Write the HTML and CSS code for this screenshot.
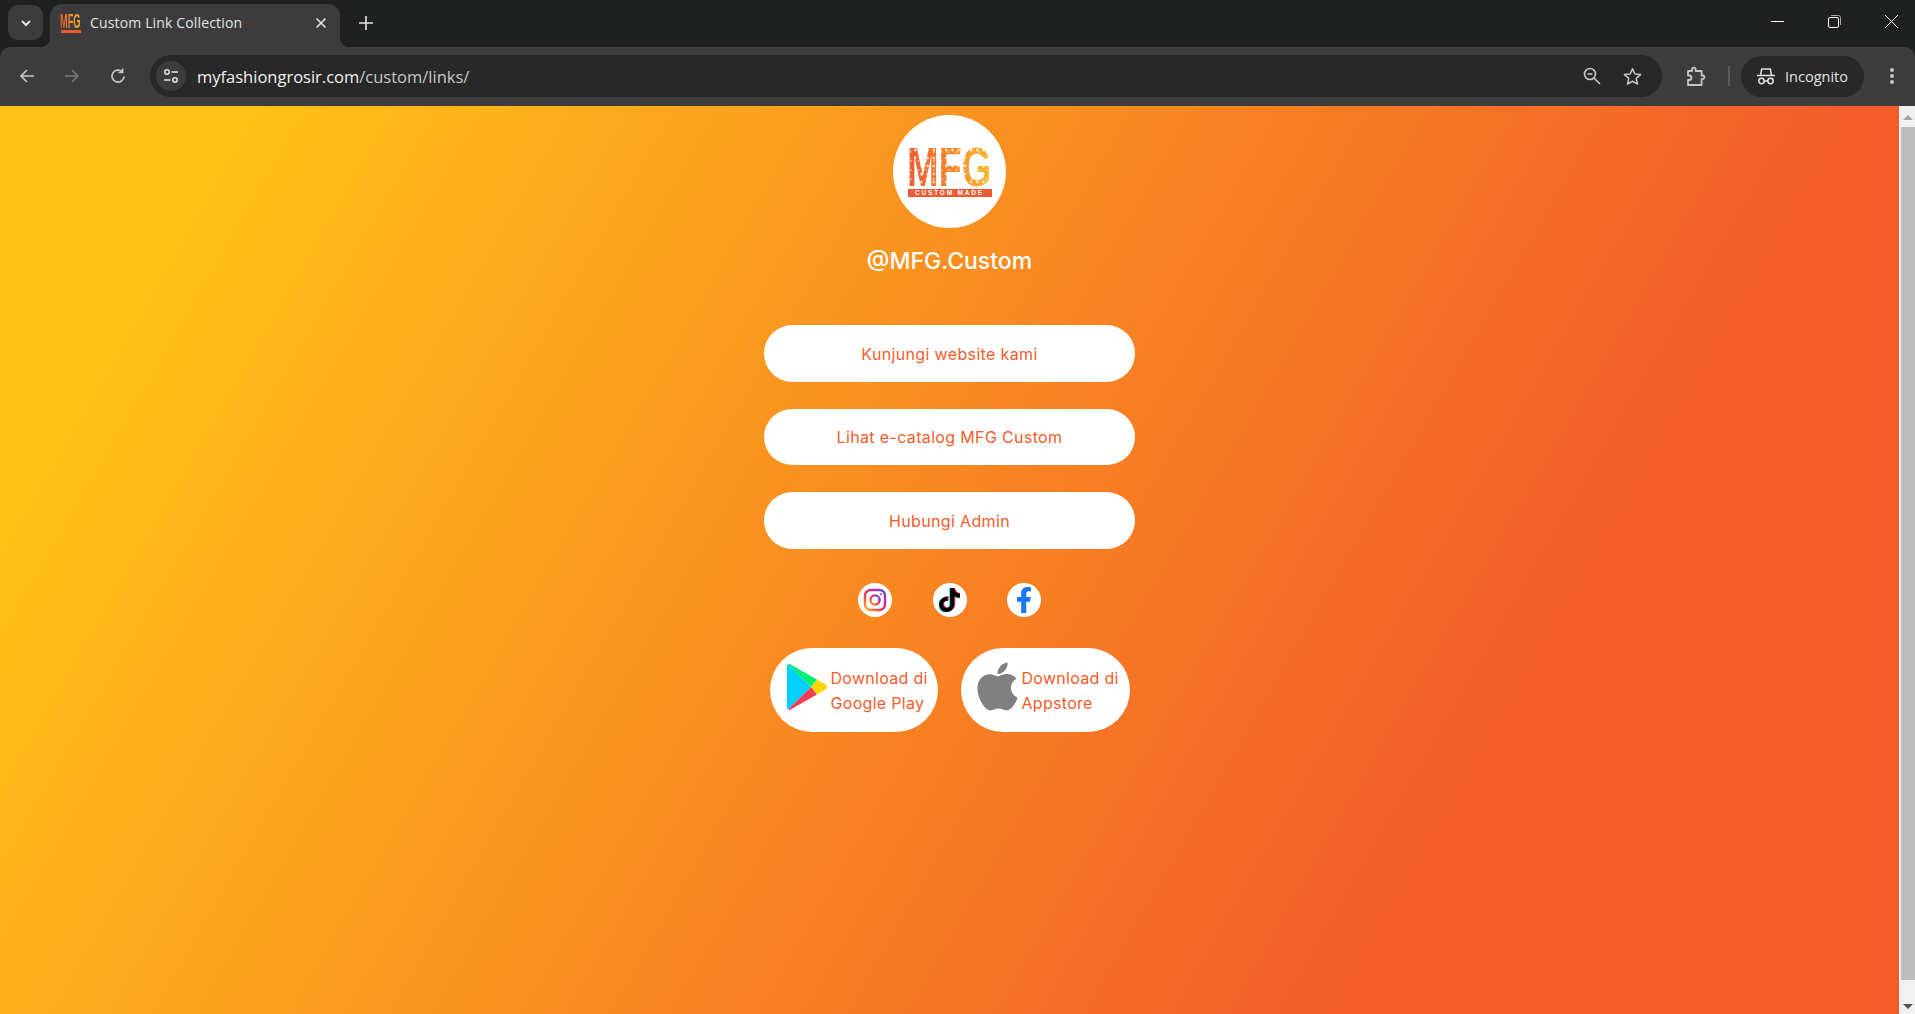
FILE: index.html
```html
<!DOCTYPE html>
<html lang="id">
<head>
  <meta charset="UTF-8">
  <meta name="viewport" content="width=device-width, initial-scale=1">
  <title>Custom Link Collection</title>
  <link rel="stylesheet" href="styles.css">
</head>
<body>

  <svg class="defs" width="0" height="0">
    <defs>
      <linearGradient id="igFill" x1="0" x2="1" y1="1" y2="0">
        <stop offset="0" stop-color="#fdc11f"/>
        <stop offset="0.35" stop-color="#f3433f"/>
        <stop offset="0.7" stop-color="#c32aa3"/>
        <stop offset="1" stop-color="#4f5bd5"/>
      </linearGradient>
    </defs>
  </svg>

  <!-- barra de abas -->
  <div class="tabstrip">
    <button class="tab-search">
      <svg width="14" height="14" viewBox="0 0 14 14"><path d="M3 5l4 4 4-4" fill="none" stroke="#e3e3e3" stroke-width="2"/></svg>
    </button>
    <div class="tab">
      <div class="favicon">
        <span class="favicon-mark">MFG</span>
        <span class="favicon-band"></span>
      </div>
      <span class="tab-title">Custom Link Collection</span>
      <svg class="tab-close" width="12" height="12" viewBox="0 0 12 12"><path d="M1.500 1.500l9 9M10.500 1.500l-9 9" stroke="#e3e3e3" stroke-width="1.600"/></svg>
    </div>
    <svg class="new-tab" width="14" height="14" viewBox="0 0 14 14"><path d="M7 0v14M0 7h14" stroke="#e3e3e3" stroke-width="1.600"/></svg>
    <div class="window-controls">
      <svg width="13" height="13" viewBox="0 0 13 13"><path d="M0 6.500h13" stroke="#fff"/></svg>
      <svg width="13" height="13" viewBox="0 0 13 13"><rect x="0.500" y="2.500" width="10" height="10" rx="1.500" fill="none" stroke="#fff"/><path d="M3 .5h7.500a2 2 0 0 1 2 2V10" fill="none" stroke="#aaa"/></svg>
      <svg width="13" height="13" viewBox="0 0 13 13"><path d="M0 0l13 13M13 0L0 13" stroke="#fff"/></svg>
    </div>
  </div>

  <!-- barra de endereco -->
  <div class="toolbar">
    <svg class="nav" width="18" height="18" viewBox="0 0 18 18"><path d="M16 9H3M9 3L3 9l6 6" fill="none" stroke="#c7c7c7" stroke-width="1.700"/></svg>
    <svg class="nav" width="18" height="18" viewBox="0 0 18 18"><path d="M2 9h13M9 3l6 6-6 6" fill="none" stroke="#777" stroke-width="1.700"/></svg>
    <svg class="nav" width="18" height="18" viewBox="0 0 18 18"><path d="M15 9.500A6 6 0 1 1 13 4.600M13.600 1.500v4h-4" fill="none" stroke="#c7c7c7" stroke-width="1.700"/></svg>
    <div class="omnibox">
      <span class="site-chip">
        <svg width="16" height="16" viewBox="0 0 16 16" fill="none" stroke="#e3e3e3" stroke-width="1.500"><circle cx="4" cy="4" r="2.200"/><path d="M8.500 4H15M1 12h6.500"/><circle cx="12" cy="12" r="2.200"/></svg>
      </span>
      <span class="url"><span class="url-host">myfashiongrosir.com</span>/custom/links/</span>
      <svg class="omni-zoom" width="18" height="18" viewBox="0 0 18 18" fill="none" stroke="#c7c7c7" stroke-width="1.600"><circle cx="7" cy="7" r="5.500"/><path d="M11 11l6 6M4.500 7h5"/></svg>
      <svg class="omni-star" width="19" height="19" viewBox="0 0 20 20"><path d="M10 1.800l2.500 5.600 6 .6-4.600 4 1.400 6L10 15l-5.300 3 1.400-6-4.600-4 6-.6z" fill="none" stroke="#c7c7c7" stroke-width="1.600" stroke-linejoin="round"/></svg>
    </div>
    <svg class="extensions" width="20" height="21" viewBox="0 0 20 21"><path d="M2 5h4V3.500a1.800 1.800 0 0 1 3.600 0V5h6v4.500h1a1.800 1.800 0 0 1 0 3.600h-1V19H2v-5h1.200a2.200 2.200 0 0 0 0-4.500H2z" fill="none" stroke="#c7c7c7" stroke-width="1.800" stroke-linejoin="round"/></svg>
    <span class="divider"></span>
    <div class="incognito">
      <svg width="18" height="18" viewBox="0 0 18 18" fill="none" stroke="#e3e3e3" stroke-width="1.500"><path d="M0 8.500h18"/><path d="M3.500 8.500l1.200-6.500h8.600l1.200 6.500"/><circle cx="4.500" cy="14" r="2.700"/><circle cx="13.500" cy="14" r="2.700"/><path d="M7 14h4"/></svg>
      <span>Incognito</span>
    </div>
    <svg class="menu-dots" width="4" height="16" viewBox="0 0 4 16" fill="#c7c7c7"><circle cx="2" cy="2" r="2"/><circle cx="2" cy="8" r="2"/><circle cx="2" cy="14" r="2"/></svg>
  </div>

  <div class="viewport">
    <main class="page">
      <div class="avatar">
        <div class="logo">
          <span class="logo-mark">MFG</span>
          <span class="logo-sub">CUSTOM MADE</span>
        </div>
      </div>
      <h1 class="handle">@MFG.Custom</h1>

      <div class="links">
        <a class="link-btn" href="#">Kunjungi website kami</a>
        <a class="link-btn link-btn-short" href="#">Lihat e-catalog MFG Custom</a>
        <a class="link-btn" href="#">Hubungi Admin</a>
      </div>

      <div class="socials">
        <a class="social" href="#">
          <svg width="24" height="24" viewBox="0 0 24 24" fill="none" stroke="url(#igFill)" stroke-width="2.400">
            <rect x="2" y="2" width="20" height="20" rx="5.500"/>
            <circle cx="12" cy="12" r="4.600"/>
            <circle cx="17.800" cy="6.200" r="0.600" fill="#c32aa3" stroke="#c32aa3" stroke-width="1"/>
          </svg>
        </a>
        <a class="social" href="#">
          <svg width="21" height="24" viewBox="0 0 448 512">
            <path transform="translate(-22 12)" fill="#25f4ee" d="M448,209.91a210.06,210.06,0,0,1-122.77-39.25V349.38A162.55,162.55,0,1,1,185,188.31V278.2a74.62,74.62,0,1,0,52.23,71.18V0l88,0a121.18,121.18,0,0,0,1.86,22.17h0A122.18,122.18,0,0,0,381,102.39a121.43,121.43,0,0,0,67,20.14Z"/>
            <path transform="translate(22 -12)" fill="#fe2c55" d="M448,209.91a210.06,210.06,0,0,1-122.77-39.25V349.38A162.55,162.55,0,1,1,185,188.31V278.2a74.62,74.62,0,1,0,52.23,71.18V0l88,0a121.18,121.18,0,0,0,1.86,22.17h0A122.18,122.18,0,0,0,381,102.39a121.43,121.43,0,0,0,67,20.14Z"/>
            <path fill="#000" d="M448,209.91a210.06,210.06,0,0,1-122.77-39.25V349.38A162.55,162.55,0,1,1,185,188.31V278.2a74.62,74.62,0,1,0,52.23,71.18V0l88,0a121.18,121.18,0,0,0,1.86,22.17h0A122.18,122.18,0,0,0,381,102.39a121.43,121.43,0,0,0,67,20.14Z"/>
          </svg>
        </a>
        <a class="social" href="#">
          <svg width="18" height="26" viewBox="0 0 320 512"><path fill="#1877f2" d="M279.14 288l14.22-92.66h-88.91v-60.13c0-25.35 12.42-50.06 52.24-50.06h40.42V6.26S260.43 0 225.36 0c-73.22 0-121.08 44.38-121.08 124.72v70.62H22.89V288h81.39v224h100.17V288z"/></svg>
        </a>
      </div>

      <div class="stores">
        <a class="store-btn store-play" href="#">
          <svg class="store-icon" width="40" height="48" viewBox="0 0 40 48">
            <path d="M1 1.500L24 24 1 46.500C.4 46 0 45.300 0 44.500v-41C0 2.700.4 2 1 1.500z" fill="#00d0ff"/>
            <path d="M1 1.500c.7-.5 1.600-.6 2.500-.1L30 16.500 24 24z" fill="#00ee76"/>
            <path d="M1 46.500c.7.5 1.600.6 2.500.1L30 31.500 24 24z" fill="#f53c54"/>
            <path d="M30 16.500l8.500 5c1.900 1.100 1.900 3.900 0 5l-8.500 5L24 24z" fill="#ffd500"/>
          </svg>
          <span>Download di<br>Google Play</span>
        </a>
        <a class="store-btn store-apple" href="#">
          <svg class="store-icon" width="41" height="55" viewBox="0 0 384 512"><path fill="#808080" d="M318.7 268.7c-.2-36.7 16.4-64.4 50-84.8-18.8-26.9-47.2-41.7-84.7-44.6-35.5-2.8-74.3 20.7-88.5 20.7-15 0-49.4-19.7-76.4-19.7C63.3 141.2 4 184.8 4 273.5q0 39.3 14.4 81.2c12.8 36.7 59 126.7 107.2 125.2 25.2-.6 43-17.9 75.8-17.9 31.8 0 48.3 17.9 76.4 17.9 48.6-.7 90.4-82.5 102.6-119.3-65.2-30.7-61.7-90-61.7-91.9zm-56.6-164.2c27.3-32.4 24.8-61.9 24-72.5-24.1 1.4-52 16.4-67.9 34.9-17.5 19.8-27.8 44.3-25.6 71.9 26.1 2 49.9-11.4 69.5-34.3z"/></svg>
          <span>Download di<br>Appstore</span>
        </a>
      </div>
    </main>

    <div class="scrollbar">
      <span class="arrow-up"></span>
      <span class="thumb"></span>
      <span class="arrow-down"></span>
    </div>
  </div>

</body>
</html>
```

FILE: styles.css
```css
* {
  box-sizing: border-box;
}
html, body {
  height: 100%;
}
body {
  margin: 0;
  display: flex;
  flex-direction: column;
  overflow: hidden;
  font-family: "Open Sans", "Noto Sans", sans-serif;
  background-color: #1f2120;
}
.defs {
  display: block;
  height: 0;
}

/* barra de abas */
.tabstrip {
  height: 47px;
  display: flex;
  align-items: flex-start;
  padding: 4px 0 0 8px;
  background-color: #1f2120;
  flex-shrink: 0;
}
.tab-search {
  width: 35px;
  height: 35px;
  margin-top: 1px;
  padding: 0;
  border: none;
  border-radius: 10px;
  background-color: #3c3c3c;
  display: flex;
  align-items: center;
  justify-content: center;
}
.tab {
  width: 290px;
  height: 43px;
  margin-left: 7px;
  padding: 0 13px 6px 10px;
  border-radius: 12px 12px 0 0;
  background-color: #3c3c3c;
  display: flex;
  align-items: center;
  color: #e3e3e3;
  font-size: 14px;
  position: relative;
}
.tab::before,
.tab::after {
  content: "";
  position: absolute;
  bottom: 0;
  width: 10px;
  height: 10px;
}
.tab::before {
  left: -10px;
  background: radial-gradient(circle at 0 0, #1f2120 10px, #3c3c3c 10.5px);
}
.tab::after {
  right: -10px;
  background: radial-gradient(circle at 100% 0, #1f2120 10px, #3c3c3c 10.5px);
}
.favicon {
  width: 21px;
  display: flex;
  flex-direction: column;
  align-items: center;
  flex-shrink: 0;
}
.favicon-mark {
  flex-shrink: 0;
  height: 16px;
  font-family: "Liberation Sans", sans-serif;
  font-weight: 700;
  font-size: 20px;
  line-height: 16px;
  white-space: nowrap;
  transform: scaleX(0.46);
  background: linear-gradient(90deg, #ee5a33, #f58a2c 55%, #fbb92f);
  -webkit-background-clip: text;
  background-clip: text;
  color: transparent;
}
.favicon-band {
  width: 20px;
  height: 3px;
  margin-top: 1px;
  background-color: #ee5a33;
}
.tab-title {
  margin-left: 9px;
  flex: 1;
  letter-spacing: 0.15px;
  white-space: nowrap;
}
.tab-close {
  flex-shrink: 0;
}
.new-tab {
  margin: 12px 0 0 19px;
}
.window-controls {
  margin-left: auto;
  width: 127px;
  margin-right: 17px;
  margin-top: 11px;
  display: flex;
  justify-content: space-between;
}

/* barra de endereco */
.toolbar {
  height: 59px;
  display: flex;
  align-items: center;
  padding: 0 21px 1px 18px;
  border-radius: 10px 10px 0 0;
  background-color: #3c3c3c;
  flex-shrink: 0;
}
.nav {
  margin-right: 27px;
  flex-shrink: 0;
}
.nav:nth-child(2) {
  margin-right: 28px;
}
.nav:nth-child(3) {
  margin-right: 23px;
}
.omnibox {
  width: 1512px;
  height: 42px;
  padding: 0 20px 0 6px;
  border-radius: 21px;
  background-color: #282828;
  display: flex;
  align-items: center;
}
.site-chip {
  width: 30px;
  height: 30px;
  border-radius: 50%;
  background-color: #3c3c3c;
  display: flex;
  align-items: center;
  justify-content: center;
}
.url {
  margin-left: 11px;
  flex: 1;
  color: #c7c7c7;
  font-size: 16.500px;
}
.url-host {
  color: #f1f1f1;
}
.omni-zoom {
  margin-right: 22px;
}
.extensions {
  margin-left: 24px;
}
.divider {
  width: 2px;
  height: 20px;
  margin-left: 22px;
  background-color: #5a5a5a;
}
.incognito {
  width: 123px;
  height: 41px;
  margin-left: 11px;
  border-radius: 21px;
  background-color: #282828;
  display: flex;
  align-items: center;
  justify-content: center;
  gap: 10px;
  color: #e3e3e3;
  font-size: 14.500px;
}
.menu-dots {
  margin-left: 26px;
}

/* pagina */
.viewport {
  flex: 1;
  display: flex;
  min-height: 0;
}
.page {
  flex: 1;
  padding-top: 9px;
  display: flex;
  flex-direction: column;
  align-items: center;
  font-family: "Inter", "Open Sans", sans-serif;
  background: linear-gradient(120deg, #ffc117 10%, #f35c2a 77%);
}
.avatar {
  width: 113px;
  height: 113px;
  border-radius: 50%;
  background-color: #fff;
  display: flex;
  align-items: center;
  justify-content: center;
}
.logo {
  width: 84px;
  display: flex;
  flex-direction: column;
  align-items: center;
  gap: 2px;
}
.logo-mark {
  flex-shrink: 0;
  height: 40px;
  font-family: "Liberation Sans", sans-serif;
  font-weight: 700;
  font-size: 55px;
  line-height: 40px;
  white-space: nowrap;
  transform: scaleX(0.69);
  background:
    radial-gradient(circle at 3px 3px, rgba(255,255,255,0.85) 1.3px, transparent 1.8px) 0 0 / 9px 8px,
    radial-gradient(circle at 2px 2px, rgba(255,255,255,0.7) 1px, transparent 1.5px) 4px 3px / 11px 9px,
    linear-gradient(90deg, #ee5a33, #f58a2c 55%, #fbb92f);
  -webkit-background-clip: text;
  background-clip: text;
  color: transparent;
}
.logo-sub {
  width: 84px;
  height: 8px;
  background-color: #ee5a33;
  color: #fff;
  font-family: "Liberation Sans", sans-serif;
  font-weight: 700;
  font-size: 6.500px;
  line-height: 8px;
  letter-spacing: 1.800px;
  text-align: center;
  white-space: nowrap;
}
.handle {
  margin: 18px 0 0;
  color: #fff;
  font-size: 23px;
  font-weight: 500;
  line-height: 30px;
}
.links {
  margin-top: 49px;
  display: flex;
  flex-direction: column;
  gap: 27px;
}
.link-btn {
  width: 371px;
  height: 57px;
  border-radius: 29px;
  background-color: #fff;
  display: flex;
  align-items: center;
  justify-content: center;
  color: #f35c2a;
  font-size: 16px;
  letter-spacing: 0.35px;
  text-decoration: none;
}
.link-btn-short {
  height: 56px;
}
.socials {
  margin-top: 34px;
  display: flex;
  gap: 40.500px;
}
.social {
  width: 34px;
  height: 34px;
  border-radius: 50%;
  background-color: #fff;
  display: flex;
  align-items: center;
  justify-content: center;
}
.stores {
  margin-top: 31px;
  display: flex;
  gap: 23px;
}
.store-btn {
  height: 84px;
  border-radius: 42px;
  background-color: #fff;
  display: flex;
  align-items: center;
  color: #f35c2a;
  font-size: 16px;
  letter-spacing: 0.3px;
  line-height: 25px;
  text-decoration: none;
  white-space: nowrap;
}
.store-btn span {
  padding-top: 2px;
}
.store-icon {
  margin-bottom: 7px;
  flex-shrink: 0;
}
.store-play {
  width: 168px;
  padding-left: 17px;
  gap: 4px;
}
.store-apple {
  width: 169px;
  padding-left: 16px;
  gap: 4px;
}

/* barra de rolagem */
.scrollbar {
  width: 16px;
  padding: 9px 0 5px;
  display: flex;
  flex-direction: column;
  align-items: center;
  background-color: #f1f1f1;
  flex-shrink: 0;
}
.arrow-up {
  margin-left: 2px;
  border: 5px solid transparent;
  border-top: none;
  border-bottom-color: #a3a3a3;
}
.thumb {
  width: 14px;
  height: 853px;
  margin: 7px 0 auto 2px;
  background-color: #bdbdbd;
}
.arrow-down {
  margin-left: 2px;
  border: 5px solid transparent;
  border-bottom: none;
  border-top-color: #505050;
}
```
